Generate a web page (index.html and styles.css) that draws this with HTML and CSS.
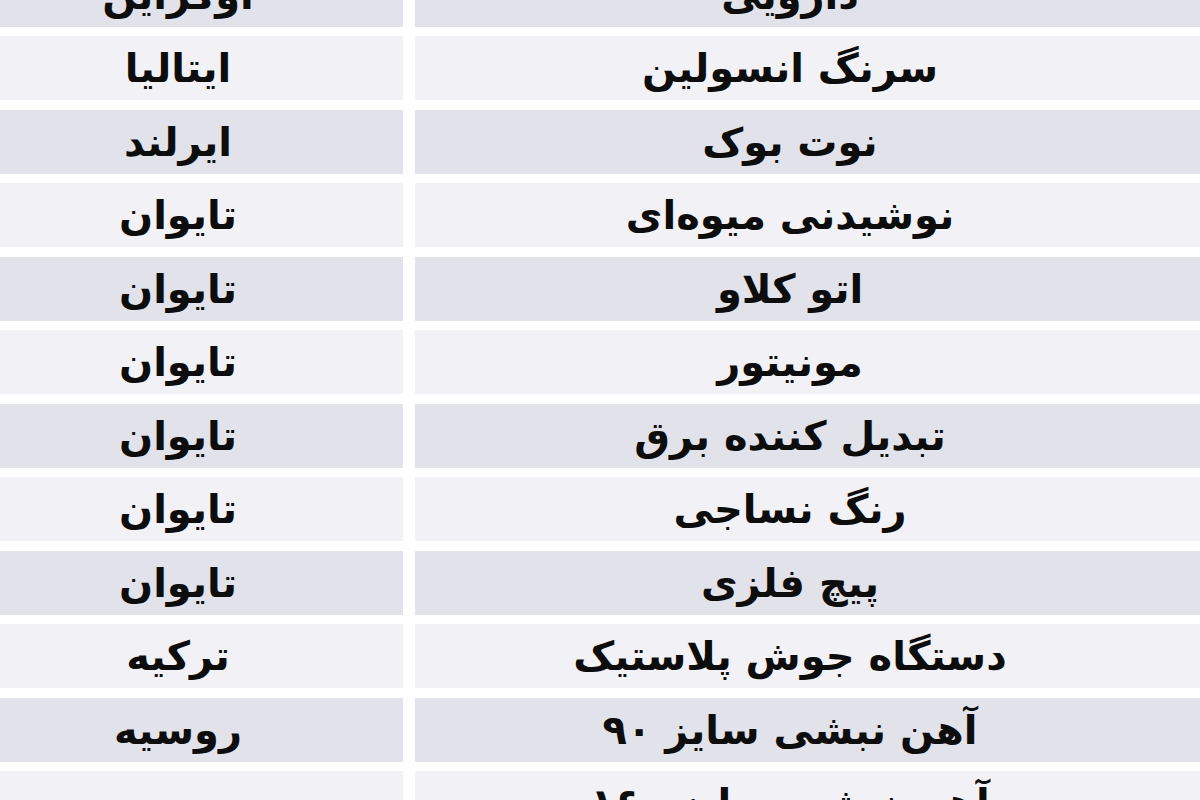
FILE: index.html
```html
<!DOCTYPE html>
<html lang="fa" dir="rtl">
<head>
<meta charset="utf-8">
<link rel="stylesheet" href="styles.css">
</head>
<body>
<div class="table">
  <div class="row dark"><div class="cell item">دارویی</div><div class="cell country">اوکراین</div></div>
  <div class="row light"><div class="cell item">سرنگ انسولین</div><div class="cell country">ایتالیا</div></div>
  <div class="row dark"><div class="cell item">نوت بوک</div><div class="cell country">ایرلند</div></div>
  <div class="row light"><div class="cell item">نوشیدنی میوه‌ای</div><div class="cell country">تایوان</div></div>
  <div class="row dark"><div class="cell item">اتو کلاو</div><div class="cell country">تایوان</div></div>
  <div class="row light"><div class="cell item">مونیتور</div><div class="cell country">تایوان</div></div>
  <div class="row dark"><div class="cell item">تبدیل کننده برق</div><div class="cell country">تایوان</div></div>
  <div class="row light"><div class="cell item">رنگ نساجی</div><div class="cell country">تایوان</div></div>
  <div class="row dark"><div class="cell item">پیچ فلزی</div><div class="cell country">تایوان</div></div>
  <div class="row light"><div class="cell item">دستگاه جوش پلاستیک</div><div class="cell country">ترکیه</div></div>
  <div class="row dark"><div class="cell item">آهن نبشی سایز ۹۰</div><div class="cell country">روسیه</div></div>
  <div class="row light"><div class="cell item">آهن نبشی سایز ۱۶۰</div><div class="cell country">روسیه</div></div>
</div>
</body>
</html>
```
FILE: styles.css
```css
html, body {
  margin: 0;
  padding: 0;
  background: #ffffff;
  overflow: hidden;
}
body {
  width: 1200px;
  height: 800px;
  font-family: "DejaVu Sans", "Noto Sans", sans-serif;
  font-weight: bold;
  color: #0d0d0d;
}
.table {
  display: flex;
  flex-direction: column;
  gap: 9.5px;
  margin-top: -37.5px;
}
.row {
  display: flex;
  gap: 12px;
  height: 64px;
}
.cell {
  display: flex;
  align-items: center;
  justify-content: center;
  font-size: 40px;
  line-height: 1;
  white-space: nowrap;
}
.item {
  width: 785px;
  padding-right: 35px;
  box-sizing: border-box;
}
.country {
  width: 403px;
  padding-right: 47px;
  box-sizing: border-box;
}
.dark .cell { background: #e1e2ea; }
.light .cell { background: #f2f2f6; }
```
